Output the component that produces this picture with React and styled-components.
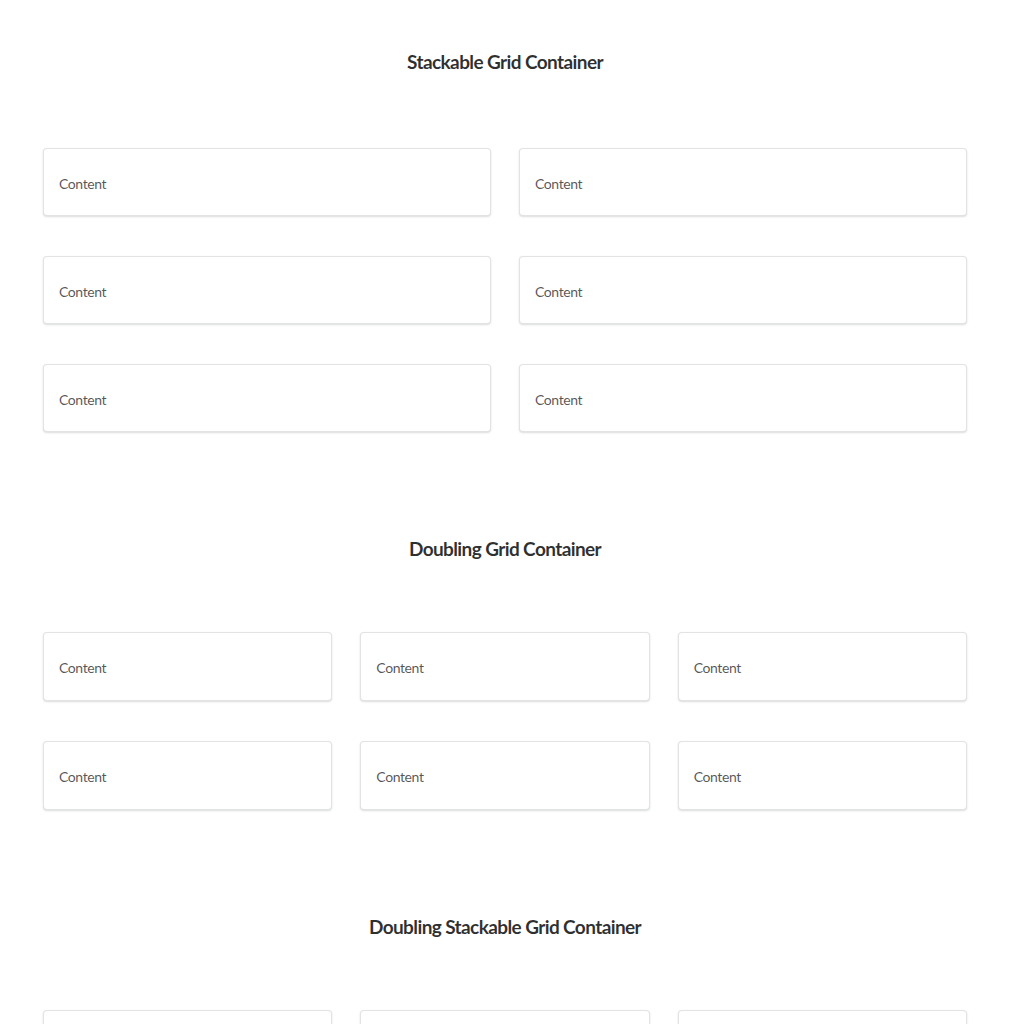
import React from "react";
import styled, { createGlobalStyle } from "styled-components";

const GlobalStyle = createGlobalStyle`
  body {
    margin: 0;
    background: #ffffff;
    font-family: Lato, "Liberation Sans", sans-serif;
  }
`;

const Page = styled.div`
  width: 924px;
  margin-left: 43px;
  padding-top: 50px;
  display: flex;
  flex-direction: column;
  gap: 105px;
`;

const Section = styled.section`
  display: flex;
  flex-direction: column;
  gap: ${(p) => p.$gap}px;
`;

const Title = styled.h3`
  margin: 0;
  height: 24px;
  line-height: 24px;
  text-align: center;
  font-size: 19px;
  font-weight: 700;
  letter-spacing: -0.6px;
  color: rgba(0, 0, 0, 0.82);
`;

const Grid = styled.div`
  display: grid;
  grid-template-columns: repeat(${(p) => p.$columns}, 1fr);
  column-gap: 28px;
  row-gap: 40px;
`;

const Segment = styled.div`
  box-sizing: border-box;
  height: ${(p) => p.$height}px;
  display: flex;
  align-items: center;
  padding: 2px 15px 0;
  background: #fff;
  border: 1px solid rgba(34, 36, 38, 0.13);
  border-radius: 4px;
  box-shadow: 0 1px 2px 0 rgba(34, 36, 38, 0.16);
  font-size: 14px;
  letter-spacing: -0.4px;
  color: rgba(0, 0, 0, 0.68);
`;

const sections = [
  { title: "Stackable Grid Container", columns: 2, count: 6, gap: 74, height: 68 },
  { title: "Doubling Grid Container", columns: 3, count: 6, gap: 71, height: 69 },
  { title: "Doubling Stackable Grid Container", columns: 3, count: 6, gap: 71, height: 69 },
];

const App = () => {
  return (
    <>
      <GlobalStyle />
      <Page>
        {sections.map((s) => (
          <Section key={s.title} $gap={s.gap}>
            <Title>{s.title}</Title>
            <Grid $columns={s.columns}>
              {Array.from({ length: s.count }).map((_, i) => (
                <Segment key={i} $height={s.height}>
                  Content
                </Segment>
              ))}
            </Grid>
          </Section>
        ))}
      </Page>
    </>
  );
};

export default App;
